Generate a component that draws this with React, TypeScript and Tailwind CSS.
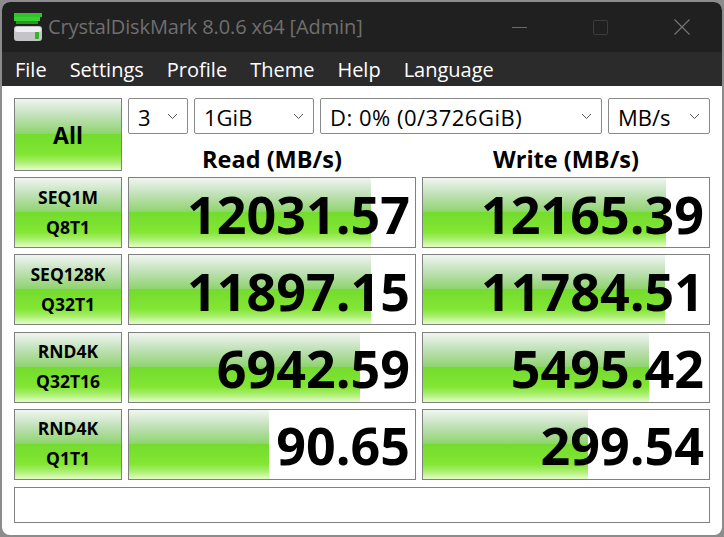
const font = "font-['Open_Sans','Noto_Sans',sans-serif]"

const fill =
    "bg-[linear-gradient(to_bottom,#f0f6f0_0%,#c4e2bc_22%,#8fd46f_49%,#74dc2e_50%,#82e633_78%,#a6ee6a_88%,#e4fcc8_100%)]"

const rows = [
    { a: "SEQ1M", b: "Q8T1", read: "12031.57", readW: 242, write: "12165.39", writeW: 243 },
    { a: "SEQ128K", b: "Q32T1", read: "11897.15", readW: 242, write: "11784.51", writeW: 242 },
    { a: "RND4K", b: "Q32T16", read: "6942.59", readW: 231, write: "5495.42", writeW: 226 },
    { a: "RND4K", b: "Q1T1", read: "90.65", readW: 140, write: "299.54", writeW: 165 },
]

function Chevron() {
    return (
        <svg width="11" height="7" viewBox="0 0 11 7" fill="none" stroke="#555" strokeWidth="1">
            <path d="M1 1l4.5 4.5L10 1" />
        </svg>
    )
}

function Select({ label, width, spacing = "" }: { label: string; width: string; spacing?: string }) {
    return (
        <div className={`${width} h-[36px] border border-[#8a8a8a] rounded-[2px] bg-white flex items-center justify-between pl-[9px] pr-[9px] text-[22px] text-black`}>
            <span className={`pt-[2px] ${spacing}`}>{label}</span>
            <Chevron />
        </div>
    )
}

function Score({ value, width }: { value: string; width: number }) {
    return (
        <div className="relative w-[288px] h-[71px] border border-[#808080] bg-white overflow-hidden">
            <div className={`absolute left-0 top-0 h-full ${fill}`} style={{ width }} />
            <div className="relative h-full flex items-center justify-end pr-[5px] pt-[2px] text-[52px] font-bold text-black leading-none">
                {value}
            </div>
        </div>
    )
}

function DiskIcon() {
    return (
        <svg width="28" height="28" viewBox="0 0 28 28">
            <rect x="0" y="0" width="28" height="4" fill="#2fc42a" />
            <rect x="0" y="4" width="26" height="4" fill="#3ccf34" />
            <rect x="2" y="8" width="22" height="3" fill="#229c1c" />
            <rect x="0" y="13" width="28" height="15" rx="3" fill="#c4c4c8" />
            <rect x="1" y="14" width="26" height="5" rx="2" fill="#eeeef2" />
            <rect x="21" y="19" width="4" height="7" fill="#35b52c" />
        </svg>
    )
}

export default function App() {
    return (
        <div className={`w-[724px] h-[537px] bg-[#8c8c8c] pt-[2px] pl-[2px] ${font}`}>
            <div className="w-[720px] h-[533px] rounded-[8px] overflow-hidden bg-white flex flex-col">
                <div className="h-[50px] bg-[#202020] flex items-center pl-[12px] shrink-0">
                    <DiskIcon />
                    <span className="ml-[6px] text-[20px] tracking-[-0.12px] text-[#6f6f6f] whitespace-nowrap">CrystalDiskMark 8.0.6 x64 [Admin]</span>
                    <div className="ml-auto flex items-center">
                        <div className="w-[15px] h-px bg-[#6a6a6a] mr-[66px]" />
                        <div className="w-[15px] h-[15px] border border-[#3c3c3c] rounded-[2px] mr-[66px]" />
                        <svg width="16" height="16" viewBox="0 0 16 16" stroke="#767676" strokeWidth="1.1" className="mr-[32px]">
                            <path d="M0.5 0.5l15 15M15.5 0.5l-15 15" />
                        </svg>
                    </div>
                </div>
                <div className="h-[34px] bg-[#2b2b2b] flex items-center pl-[13px] pt-[2px] gap-[23px] text-[20px] text-white shrink-0">
                    <span>File</span>
                    <span>Settings</span>
                    <span>Profile</span>
                    <span>Theme</span>
                    <span>Help</span>
                    <span>Language</span>
                </div>
                <div className="pt-[12px] pl-[12px] flex flex-col">
                    <div className="flex gap-[6px] h-[79px]">
                        <div className={`w-[108px] h-[73px] border border-[#808080] flex items-center justify-center pt-[2px] text-[23px] font-bold text-black ${fill}`}>
                            All
                        </div>
                        <div className="flex flex-col">
                            <div className="flex gap-[6px]">
                                <Select label="3" width="w-[60px]" />
                                <Select label="1GiB" width="w-[120px]" />
                                <Select label="D: 0% (0/3726GiB)" width="w-[282px]" spacing="tracking-[0.5px]" />
                                <Select label="MB/s" width="w-[102px]" />
                            </div>
                            <div className="flex gap-[6px] mt-[7px] text-[23.5px] font-bold text-black leading-[36px]">
                                <div className="w-[288px] text-center">Read (MB/s)</div>
                                <div className="w-[288px] text-center">Write (MB/s)</div>
                            </div>
                        </div>
                    </div>
                    <div className="flex flex-col gap-[6.3px]">
                        {rows.map((r) => (
                            <div key={r.a + r.b} className="flex gap-[6px]">
                                <div className={`w-[108px] h-[71px] border border-[#808080] flex flex-col items-center justify-center gap-[6px] pb-[2px] text-[17.5px] font-bold text-black leading-[24px] ${fill}`}>
                                    <span>{r.a}</span>
                                    <span>{r.b}</span>
                                </div>
                                <Score value={r.read} width={r.readW} />
                                <Score value={r.write} width={r.writeW} />
                            </div>
                        ))}
                    </div>
                    <div className="w-[696px] h-[36px] mt-[7px] border border-[#808080] bg-white" />
                </div>
            </div>
        </div>
    )
}
